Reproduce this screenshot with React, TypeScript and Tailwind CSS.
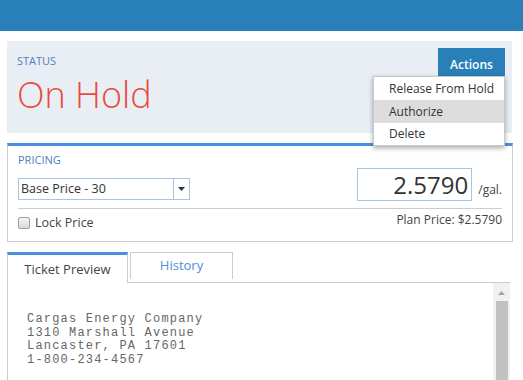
import React from "react";

export default function App() {
  return (
    <div
      className="relative w-[523px] h-[380px] overflow-hidden bg-white text-[#333]"
      style={{ fontFamily: '"Open Sans", "Noto Sans", sans-serif' }}
    >
      <div className="h-[31px] bg-[#2980b9]" />

      {/* Status panel */}
      <div className="relative mt-[10px] ml-[7px] w-[505px] h-[92px] bg-[#e9eef5] flex justify-between pl-[10px] pr-[7px] pt-[7px]">
        <div className="pt-[6px]">
          <div className="text-[11px] leading-[14px] text-[#4a7fc1]">STATUS</div>
          <div className="mt-[9px] text-[36px] leading-[36px] font-light text-[#e74c3c]">On Hold</div>
        </div>
        <div className="h-[33px] w-[67px] bg-[#2980b9] text-white text-[12px] font-semibold flex items-center justify-center">
          Actions
        </div>
        <div className="absolute left-[366px] top-[35px] w-[132px] bg-white border border-[#c8c8c8] shadow-[0_2px_5px_rgba(0,0,0,0.35)] z-10 text-[12px] text-[#333]">
          <div className="h-[23px] flex items-center pl-[15px]">Release From Hold</div>
          <div className="h-[23px] flex items-center pl-[15px] bg-[#dddddd]">Authorize</div>
          <div className="h-[22px] flex items-center pl-[15px]">Delete</div>
        </div>
      </div>

      {/* Pricing panel */}
      <div className="mt-[10px] ml-[7px] w-[506px] h-[99px] border-t-[3px] border-t-[#4a8fe2] border-x border-b border-[#cccccc] px-[10px] pt-[7px]">
        <div className="text-[11px] leading-[14px] text-[#4a7fc1]">PRICING</div>
        <div className="flex justify-between items-end mt-[1px]">
          <div className="flex w-[172px] h-[22px] border border-[#a9c3e3] bg-white mb-[1px]">
            <div className="flex-1 flex items-center pl-[2px] text-[12.5px]">Base Price - 30</div>
            <div className="w-[16px] border-l border-[#a9c3e3] flex items-center justify-center">
              <svg width="7" height="4" viewBox="0 0 7 4">
                <path d="M0 0 L7 0 L3.5 4 Z" fill="#333" />
              </svg>
            </div>
          </div>
          <div className="flex items-baseline">
            <div className="w-[115px] h-[33px] border border-[#a9c3e3] text-right pr-[3px] text-[24px] leading-[31px] text-[#333]">
              2.5790
            </div>
            <div className="ml-[6px] text-[12px] text-[#444]">/gal.</div>
          </div>
        </div>
        <div className="mt-[7px] border-t border-[#cccccc] flex justify-between items-start pt-[2px]">
          <div className="flex items-center mt-[3px]">
            <div className="w-[12px] h-[12px] rounded-[2px] border border-[#a0a0a0] bg-gradient-to-b from-[#f4f4f4] to-[#d8d8d8]" />
            <span className="ml-[5px] text-[12.5px] text-[#444]">Lock Price</span>
          </div>
          <div className="text-[12px] text-[#444]">Plan Price: $2.5790</div>
        </div>
      </div>

      {/* Tabs */}
      <div className="mt-[10px] ml-[7px] w-[503px]">
        <div className="flex items-start h-[31px]">
          <div className="w-[121px] h-[31px] bg-white border-t-[3px] border-t-[#4a8fe2] border-l border-r border-[#cccccc] flex items-center justify-center text-[13px] text-[#444] pt-[2px]">
            Ticket Preview
          </div>
          <div className="flex-1 h-[31px] border-b border-[#cccccc]">
            <div className="ml-[2px] w-[103px] h-[27px] border-t border-x border-[#cccccc] flex items-center justify-center text-[13px] text-[#4a8fd8]">
              History
            </div>
          </div>
        </div>
        <div className="relative h-[110px] border-l border-[#cccccc]">
          <div
            className="pl-[19px] pt-[30px] text-[12px] leading-[13.7px] tracking-[1.2px] text-[#666]"
            style={{ fontFamily: '"Liberation Mono", "Courier New", monospace' }}
          >
            <div>Cargas Energy Company</div>
            <div>1310 Marshall Avenue</div>
            <div>Lancaster, PA 17601</div>
            <div>1-800-234-4567</div>
          </div>
          <div className="absolute right-0 top-0 bottom-0 w-[17px] bg-[#f1f1f1] flex flex-col items-center">
            <svg className="mt-[8px]" width="7" height="4" viewBox="0 0 7 4">
              <path d="M3.5 0 L7 4 L0 4 Z" fill="#a3a3a3" />
            </svg>
            <div className="mt-[6px] w-[12px] flex-1 bg-[#c1c1c1]" />
          </div>
        </div>
      </div>
    </div>
  );
}
